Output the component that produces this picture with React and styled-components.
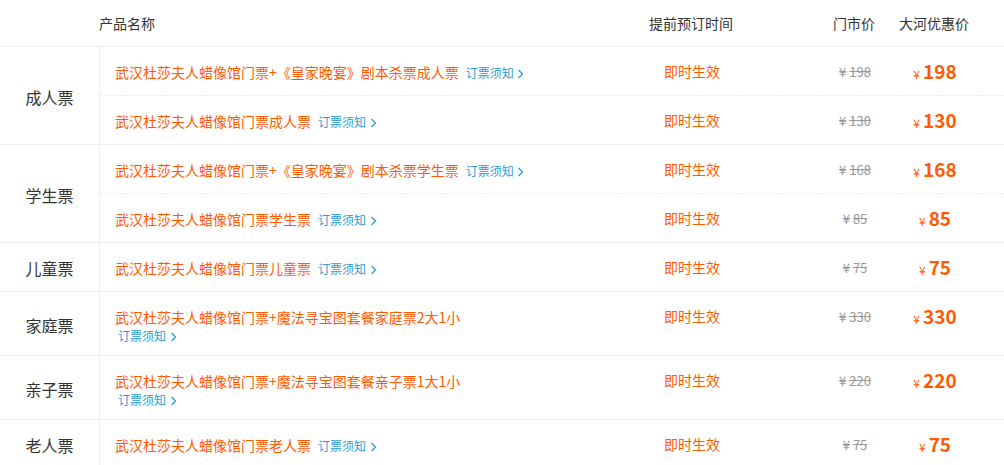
import React from "react";
import styled, { createGlobalStyle } from "styled-components";

const GROUPS = [
  {
    label: "成人票",
    items: [
      { name: "武汉杜莎夫人蜡像馆门票+《皇家晚宴》剧本杀票成人票", market: 198, price: 198 },
      { name: "武汉杜莎夫人蜡像馆门票成人票", market: 130, price: 130 },
    ],
  },
  {
    label: "学生票",
    items: [
      { name: "武汉杜莎夫人蜡像馆门票+《皇家晚宴》剧本杀票学生票", market: 168, price: 168 },
      { name: "武汉杜莎夫人蜡像馆门票学生票", market: 85, price: 85 },
    ],
  },
  {
    label: "儿童票",
    items: [{ name: "武汉杜莎夫人蜡像馆门票儿童票", market: 75, price: 75 }],
  },
  {
    label: "家庭票",
    items: [
      { name: "武汉杜莎夫人蜡像馆门票+魔法寻宝图套餐家庭票2大1小", market: 330, price: 330, wrap: true },
    ],
  },
  {
    label: "亲子票",
    items: [
      { name: "武汉杜莎夫人蜡像馆门票+魔法寻宝图套餐亲子票1大1小", market: 220, price: 220, wrap: true },
    ],
  },
  {
    label: "老人票",
    items: [{ name: "武汉杜莎夫人蜡像馆门票老人票", market: 75, price: 75 }],
  },
];

const GlobalStyle = createGlobalStyle`
  body {
    margin: 0;
    background: #fff;
    font-family: "Noto Sans CJK SC", "Noto Sans", sans-serif;
  }
`;

const Chevron = () => (
  <svg width="7" height="10" viewBox="0 0 7 10" fill="none">
    <path d="M1.5 1l4 4-4 4" stroke="currentColor" strokeWidth="1.3" />
  </svg>
);

const TicketTable = () => (
  <Table>
    <HeadRow>
      <HeadBlank />
      <HeadCols>
        <HeadCell>产品名称</HeadCell>
        <HeadCell $align="center">提前预订时间</HeadCell>
        <HeadCell $align="center">门市价</HeadCell>
        <HeadCell $align="center">大河优惠价</HeadCell>
      </HeadCols>
    </HeadRow>

    {GROUPS.map((group) => (
      <GroupRow key={group.label}>
        <Category>{group.label}</Category>
        <Items>
          {group.items.map((item, i) => (
            <ItemRow key={item.name} $tall={item.wrap} $divider={i > 0}>
              <NameCell>
                <Name>{item.name}</Name>
                <Notice $block={item.wrap}>
                  订票须知 <Chevron />
                </Notice>
              </NameCell>
              <TimeCell>即时生效</TimeCell>
              <MarketCell>
                <MarketYen>¥</MarketYen>
                {item.market}
              </MarketCell>
              <PriceCell>
                <Yen>¥</Yen>
                {item.price}
              </PriceCell>
            </ItemRow>
          ))}
        </Items>
      </GroupRow>
    ))}
  </Table>
);

const App = () => (
  <>
    <GlobalStyle />
    <TicketTable />
  </>
);

const COLS = "469px 246px 80px 80px 1fr";

const Table = styled.div`
  width: 1004px;
  color: #333;
`;

const HeadRow = styled.div`
  display: flex;
  height: 46px;
  border-bottom: 1px solid #eee;
`;

const HeadBlank = styled.div`
  width: 99px;
`;

const HeadCols = styled.div`
  flex: 1;
  display: grid;
  grid-template-columns: ${COLS};
  align-items: center;
`;

const HeadCell = styled.div`
  font-size: 14px;
  color: #333;
  text-align: ${(p) => p.$align || "left"};
`;

const GroupRow = styled.div`
  display: flex;
  border-bottom: 1px solid #eee;
`;

const Category = styled.div`
  width: 99px;
  flex-shrink: 0;
  border-right: 1px solid #eee;
  display: flex;
  align-items: center;
  justify-content: center;
  font-size: 16px;
  color: #333;
  padding-top: 2px;
`;

const Items = styled.div`
  flex: 1;
  display: flex;
  flex-direction: column;
`;

const ItemRow = styled.div`
  display: grid;
  grid-template-columns: ${COLS};
  align-items: start;
  box-sizing: border-box;
  overflow: hidden;
  height: ${(p) => (p.$tall ? 63 : 48) + (p.$divider ? 1 : 0)}px;
  padding-top: 14px;
  border-top: ${(p) => (p.$divider ? "1px dashed #eee" : "none")};
`;

const NameCell = styled.div`
  padding-left: 15px;
  line-height: 20px;
`;

const Name = styled.span`
  font-size: 14px;
  color: #ff5a00;
`;

const Notice = styled.span`
  display: ${(p) => (p.$block ? "block" : "inline")};
  margin-left: ${(p) => (p.$block ? "3px" : "7px")};
  line-height: 18px;
  font-size: 12px;
  color: #2a9ad6;
  white-space: nowrap;

  svg {
    margin-left: 1px;
    vertical-align: -1px;
  }
`;

const TimeCell = styled.div`
  text-align: center;
  font-size: 14px;
  line-height: 20px;
  color: #ff5a00;
`;

const MarketCell = styled.div`
  text-align: center;
  font-size: 13px;
  line-height: 20px;
  color: #999;
  text-decoration: line-through;
  margin-top: 1px;
`;

const MarketYen = styled.span`
  padding-right: 3px;
`;

const PriceCell = styled.div`
  text-align: center;
  font-size: 19px;
  font-weight: 700;
  line-height: 20px;
  color: #ff5a00;
`;

const Yen = styled.span`
  font-size: 12px;
  font-weight: 400;
  margin-right: 3px;
`;

export default App;
